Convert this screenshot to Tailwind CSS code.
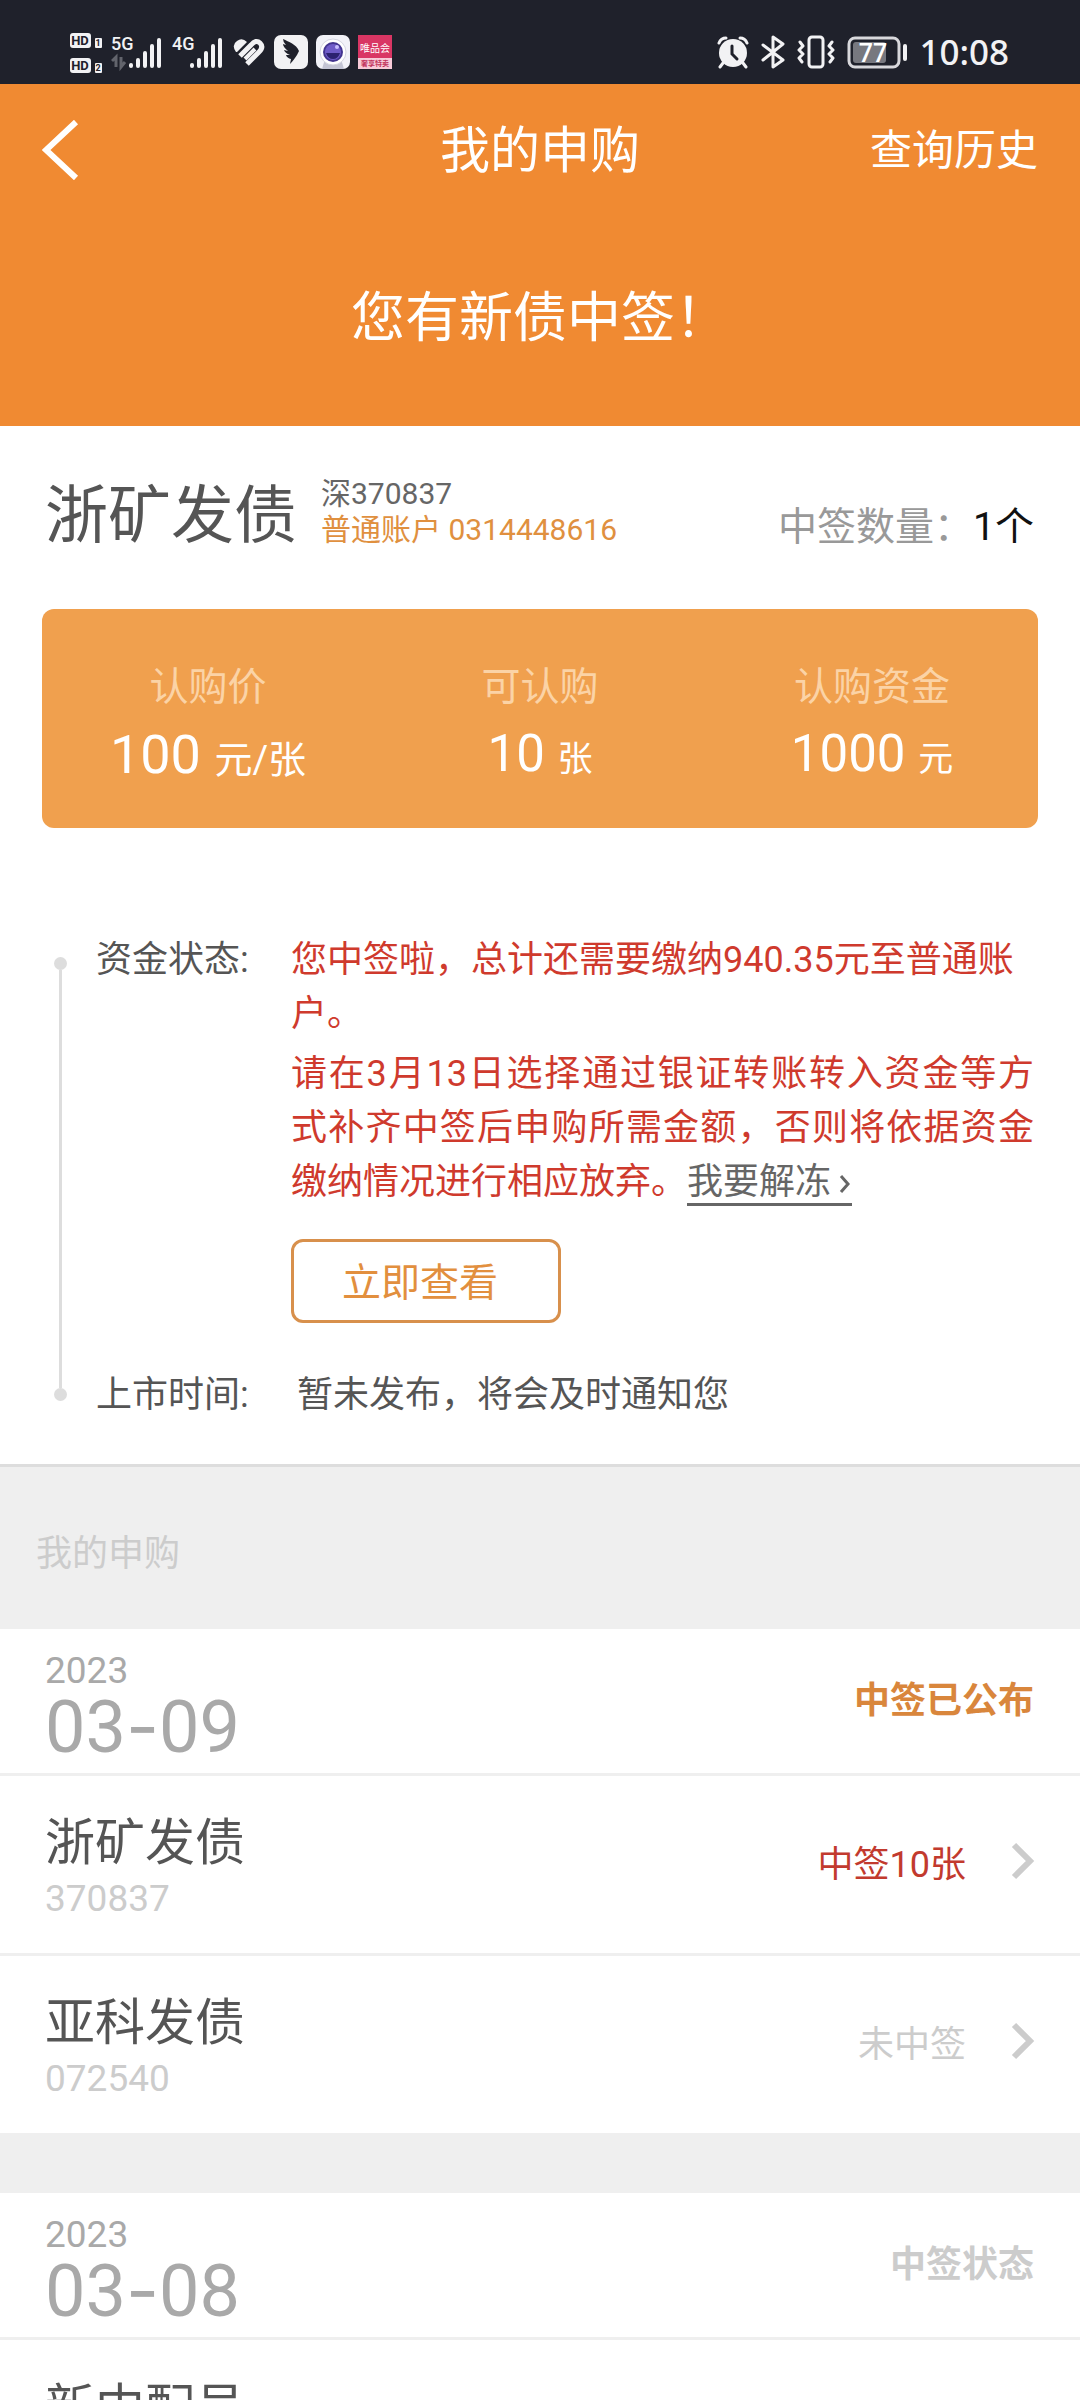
<!DOCTYPE html>
<html lang="zh-CN">
<head>
<meta charset="utf-8">
<meta name="viewport" content="width=device-width, initial-scale=1">
<title>我的申购</title>
<script src="https://cdn.jsdelivr.net/npm/@tailwindcss/browser@4"></script>
</head>
<body class="h-screen overflow-hidden bg-[#efefef] font-[Roboto,'Noto_Sans_CJK_SC',sans-serif] text-[36px] leading-[54px] text-[#555]">

<!-- Status bar -->
<div class="flex h-[84px] items-end justify-between bg-[#1f212b] pr-[71px] pb-[10px] pl-[70px] text-[#f2f2f4]">
  <div class="flex h-[44px] items-center">
    <svg class="h-[44px] w-[34px]" viewBox="0 0 34 44" aria-label="HD 1 HD 2">
      <rect x="0" y="3" width="21" height="15" rx="3" fill="#f2f2f4"/>
      <rect x="0" y="28" width="21" height="15" rx="3" fill="#f2f2f4"/>
      <rect x="25" y="8" width="7" height="10" rx="1" fill="#f2f2f4"/>
      <rect x="25" y="33" width="7" height="10" rx="1" fill="#f2f2f4"/>
      <g font-family="Roboto, sans-serif" font-weight="700" fill="#1f212b" text-anchor="middle">
        <text x="10" y="15" font-size="13">HD</text><text x="10" y="40" font-size="13">HD</text>
        <text x="28" y="16" font-size="9">1</text><text x="28" y="41" font-size="9">2</text>
      </g>
    </svg>
    <svg class="ml-[7px] h-[44px] w-[52px]" viewBox="0 0 52 44" aria-label="5G">
      <text x="0" y="20" font-family="Roboto, sans-serif" font-weight="500" font-size="18" fill="#f2f2f4">5G</text>
      <g stroke="#62646c" stroke-width="3" fill="none"><path d="M1 31l4-4v10M10 27v10l4-5"/></g>
      <g stroke="#f2f2f4" stroke-width="4" stroke-linecap="round"><path d="M20 35v1M27 30v6M34 23v13M41 16v20M48 10v26"/></g>
    </svg>
    <svg class="ml-[9px] h-[44px] w-[52px]" viewBox="0 0 52 44" aria-label="4G">
      <text x="0" y="20" font-family="Roboto, sans-serif" font-weight="500" font-size="18" fill="#f2f2f4">4G</text>
      <g stroke="#f2f2f4" stroke-width="4" stroke-linecap="round"><path d="M20 35v1M27 30v6M34 23v13M41 16v20M48 10v26"/></g>
    </svg>
    <svg class="ml-[9px] h-[28px] w-[32px]" viewBox="0 0 32 28" fill="none" stroke="#f2f2f4" stroke-width="5">
      <path d="M3 14Q-2 7 4 3Q9 -1 14 4L4 14Z" fill="#f2f2f4" stroke="none"/>
      <path d="M7 18L18 7Q23 1 27 5Q31 9 26 14L14 26"/><path d="M12 21L22 11" stroke-width="4"/>
    </svg>
    <svg class="ml-[9px] h-[34px] w-[34px]" viewBox="0 0 34 34">
      <rect width="34" height="34" rx="7" fill="#f2f2f4"/>
      <path d="M9 4C15 7 22 9 25 16L23 20C21 23 19 26 16 29L17 24Q13 23 12 20L16 20Q11 18 10 15L14 16Q9 12 9 9L12 10Q9 7 9 4Z" fill="#1f212b"/>
    </svg>
    <svg class="ml-[8px] h-[34px] w-[34px]" viewBox="0 0 34 34">
      <rect width="34" height="34" rx="7" fill="#f2f2f8"/><path d="M6 34L9 24H25L28 34Z" fill="#c3c4d4"/>
      <circle cx="17" cy="17" r="13" fill="#fff" stroke="#d4d5e0"/><circle cx="17" cy="17" r="10" fill="#43358f"/><circle cx="17" cy="17" r="8" fill="#6f5cc8"/><path d="M10 18H24Q22 24 17 24Q12 24 10 18Z" fill="#2c2270"/><circle cx="21" cy="12" r="2" fill="#c9bfff"/>
    </svg>
    <svg class="ml-[8px] h-[34px] w-[34px]" viewBox="0 0 34 34">
      <rect width="34" height="34" fill="#d93664"/><rect y="23" width="34" height="11" fill="#f7cbd8"/>
      <g font-family="Noto Sans CJK SC, sans-serif" text-anchor="middle"><text x="17" y="17" font-size="10" fill="#fff">唯品会</text><text x="17" y="31" font-size="7" font-weight="700" fill="#c2335c">奢享特卖</text></g>
    </svg>
  </div>
  <div class="flex h-[44px] items-center">
    <svg class="h-[34px] w-[32px]" viewBox="0 0 32 34" fill="none" stroke="#f2f2f4" stroke-width="3" stroke-linecap="round">
      <circle cx="16" cy="18" r="14" fill="#f2f2f4" stroke="none"/><path d="M2 8Q4 3 9 3M23 3Q28 3 30 8M6 28l-3 4M26 28l3 4"/><path d="M15 11v8l5 5" stroke="#1f212b"/>
    </svg>
    <svg class="ml-[11px] h-[36px] w-[26px]" viewBox="0 0 26 36" fill="none" stroke="#f2f2f4" stroke-width="3" stroke-linejoin="round" stroke-linecap="round"><path d="M3 11L23 26L13 33V3L23 10L3 26"/></svg>
    <svg class="ml-[11px] h-[36px] w-[38px]" viewBox="0 0 38 36" fill="none" stroke="#f2f2f4" stroke-width="3" stroke-linecap="round" stroke-linejoin="round"><rect x="12" y="3" width="14" height="30" rx="3"/><path d="M3 8l3 4l-4 4l4 4l-4 4l3 4M35 8l-3 4l4 4l-4 4l4 4l-3 4"/></svg>
    <svg class="ml-[12px] h-[34px] w-[62px]" viewBox="0 0 62 34" aria-label="77%">
      <rect x="2" y="3" width="50" height="29" rx="6" fill="none" stroke="#d8d8dc" stroke-width="3"/><rect x="6" y="7" width="33" height="21" rx="3" fill="#77787f"/><rect x="56" y="9" width="4" height="17" rx="2" fill="#f2f2f4"/>
      <text x="26" y="27" font-family="Roboto, sans-serif" font-size="25" font-weight="500" text-anchor="middle" fill="#fff">77</text>
    </svg>
    <span class="ml-[10px] font-[Noto_Sans,sans-serif] text-[35px] leading-[44px] font-medium">10:08</span>
  </div>
</div>

<!-- Header -->
<header class="bg-[#f08a32] text-white">
  <div class="grid h-[132px] grid-cols-[1fr_auto_1fr] items-center px-[42px]">
    <button type="button" aria-label="返回" class="justify-self-start"><svg class="h-[60px] w-[38px]" viewBox="0 0 38 60" fill="none" stroke="#fff" stroke-width="6"><path d="M34 2L4 30L34 58"/></svg></button>
    <h1 class="pt-[2px] text-[50px]">我的申购</h1>
    <a href="#history" class="justify-self-end pt-[2px] text-[42px]">查询历史</a>
  </div>
  <p class="pt-[76px] pb-[80px] text-center text-[54px] leading-[54px]">您有新债中签！</p>
</header>

<!-- Allotted bond -->
<section class="border-b-3 border-[#ddd] bg-white">
  <div class="flex items-center pt-[50px] pr-[46px] pl-[45px]">
    <h2 class="text-[63px] leading-[80px]">浙矿发债</h2>
    <div class="ml-[24px] pb-[8px] text-[30px] leading-[36px]">
      <p class="text-[#666]">深370837</p>
      <p class="text-[#e0903f]">普通账户 0314448616</p>
    </div>
    <p class="ml-auto pt-[22px] text-[39px] text-[#999]">中签数量：<span class="text-[#111]">1个</span></p>
  </div>

  <dl class="mx-[42px] mt-[53px] grid h-[219px] grid-cols-3 content-center rounded-[12px] bg-[#f0a04e] pt-[20px] text-center text-white">
    <div><dt class="text-[39px] leading-[58px] text-[#fbd3a6]">认购价</dt><dd class="text-[54px] leading-[78px]">100 <span class="text-[38px]">元/张</span></dd></div>
    <div><dt class="text-[39px] leading-[58px] text-[#fbd3a6]">可认购</dt><dd class="text-[51px] leading-[76px]">10 <span class="text-[35px]">张</span></dd></div>
    <div><dt class="text-[39px] leading-[58px] text-[#fbd3a6]">认购资金</dt><dd class="text-[51px] leading-[76px]">1000 <span class="text-[35px]">元</span></dd></div>
  </dl>

  <div class="mt-[105px] flex pr-[46px] pb-[42px] pl-[54px]">
    <div class="flex w-[13px] flex-col items-center pt-[24px] pb-[21px]">
      <span class="size-[13px] rounded-full bg-[#ddd]"></span>
      <span class="w-[3px] grow bg-[#ddd]"></span>
      <span class="size-[13px] rounded-full bg-[#ddd]"></span>
    </div>
    <dl class="ml-[29px] grid flex-1 grid-cols-[195px_1fr] gap-y-[45px]">
      <dt>资金状态:</dt>
      <dd class="text-[#cf3a2d]">
        <p>您中签啦，总计还需要缴纳940.35元至普通账户。</p>
        <p class="mt-[6px] text-justify">请在3月13日选择通过银证转账转入资金等方式补齐中签后申购所需金额，否则将依据资金缴纳情况进行相应放弃。<a href="#unfreeze" class="border-b-3 border-[#666] text-[#666]">我要解冻<svg class="ml-[7px] inline h-[22px] w-[14px]" viewBox="0 0 14 22" fill="none" stroke="#666" stroke-width="3"><path d="M3 3L10 11L3 19"/></svg></a></p>
        <button type="button" class="mt-[30px] block h-[84px] w-[270px] rounded-[12px] border-3 border-[#d8904c] pt-[4px] pl-[48px] text-left text-[39px] text-[#e28f3e]">立即查看</button>
      </dd>
      <dt>上市时间:</dt>
      <dd class="pl-[6px]">暂未发布，将会及时通知您</dd>
    </dl>
  </div>
</section>

<!-- Subscription records -->
<h2 class="px-[36px] pt-[60px] pb-[48px] text-[#ccc]">我的申购</h2>
<section class="bg-white">
  <div class="flex h-[147px] items-center justify-between border-b-3 border-[#efefef] pr-[46px] pl-[45px]">
    <p class="pt-[12px] text-[#a9a9a9]"><span class="block text-[37px] leading-[40px]">2023</span><span class="block text-[72px] leading-[70px]">03<span class="font-[Inter]">-</span>09</span></p>
    <strong class="text-[#d9863c]">中签已公布</strong>
  </div>
  <a href="#370837" class="flex h-[180px] items-center border-b-3 border-[#efefef] pr-[44px] pl-[45px]">
    <div class="pt-[4px]"><h3 class="text-[50px] leading-[64px]">浙矿发债</h3><p class="text-[37px] leading-[48px] text-[#ccc]">370837</p></div>
    <span class="ml-auto text-[#c23a2e]">中签10张</span>
    <svg class="mb-[8px] ml-[44px] h-[38px] w-[26px]" viewBox="0 0 26 38" fill="none" stroke="#ccc" stroke-width="6"><path d="M4 3L20 19L4 35"/></svg>
  </a>
  <a href="#072540" class="flex h-[177px] items-center pr-[44px] pl-[45px]">
    <div class="pt-[4px]"><h3 class="text-[50px] leading-[64px]">亚科发债</h3><p class="text-[37px] leading-[48px] text-[#ccc]">072540</p></div>
    <span class="ml-auto text-[#ccc]">未中签</span>
    <svg class="mb-[8px] ml-[44px] h-[38px] w-[26px]" viewBox="0 0 26 38" fill="none" stroke="#ccc" stroke-width="6"><path d="M4 3L20 19L4 35"/></svg>
  </a>
</section>
<section class="mt-[60px] bg-white">
  <div class="flex h-[147px] items-center justify-between border-b-3 border-[#efefef] pr-[46px] pl-[45px]">
    <p class="pt-[12px] text-[#a9a9a9]"><span class="block text-[37px] leading-[40px]">2023</span><span class="block text-[72px] leading-[70px]">03<span class="font-[Inter]">-</span>08</span></p>
    <strong class="text-[#ccc]">中签状态</strong>
  </div>
  <a href="#allotment" class="flex h-[180px] items-center pr-[44px] pl-[45px]">
    <div class="pt-[4px]"><h3 class="text-[50px] leading-[64px]">新中配号</h3><p class="text-[37px] leading-[48px] text-[#ccc]">&nbsp;</p></div>
  </a>
</section>
</body>
</html>
